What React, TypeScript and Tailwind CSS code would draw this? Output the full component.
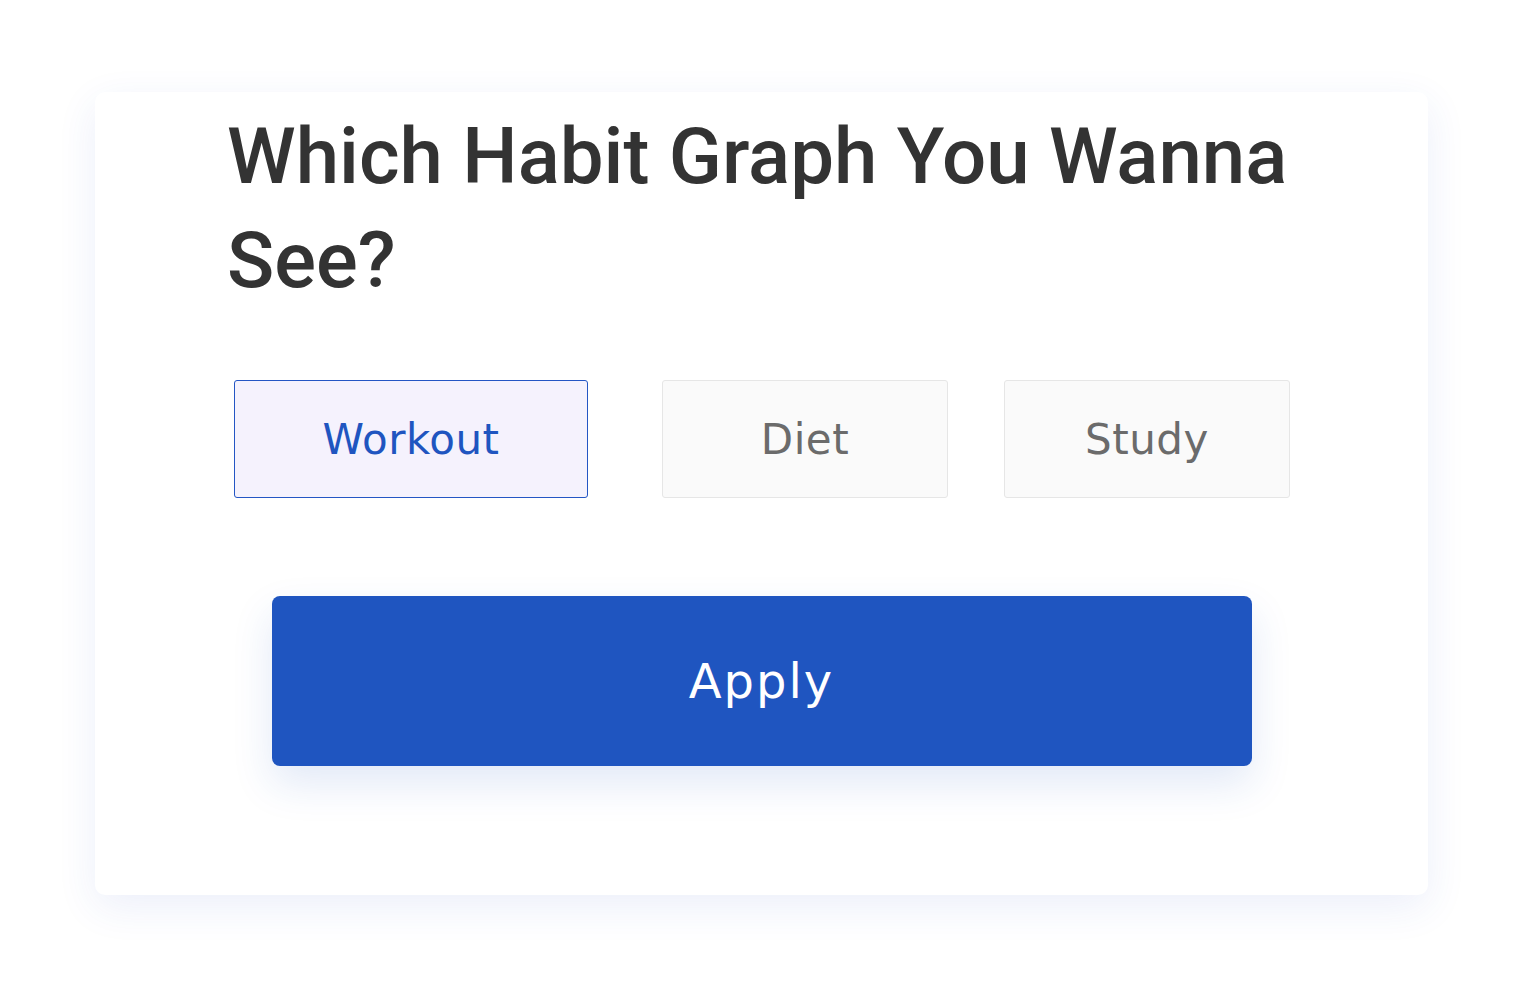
const options = [
  { label: "Workout", active: true, width: "w-[354px]" },
  { label: "Diet", active: false, width: "w-[286px]" },
  { label: "Study", active: false, width: "w-[286px]" },
];

export default function App() {
  return (
    <div className="min-h-[1004px] w-[1524px] bg-white pt-[92px] pl-[95px]">
      <div className="w-[1333px] h-[803px] rounded-[10px] bg-white shadow-[0_12px_40px_rgba(40,80,200,0.09)]">
        <h1
          className="pl-[132px] pt-[13px] pr-[100px] text-[78px] leading-[104px] font-medium text-[#333333]"
          style={{ fontFamily: "Roboto, sans-serif" }}
        >
          Which Habit Graph You Wanna See?
        </h1>

        <div className="mt-[67px] ml-[139px] flex items-center">
          {options.map((opt, i) => (
            <button
              key={opt.label}
              className={[
                "h-[118px] rounded-[3px] border text-[42px] tracking-[0.5px]",
                opt.width,
                i === 1 ? "ml-[74px]" : i === 2 ? "ml-[56px]" : "",
                opt.active
                  ? "border-[#2456c4] bg-[#f5f2fd] text-[#1f55c0]"
                  : "border-[#e6e6e6] bg-[#fafafa] text-[#6b6b6b]",
              ].join(" ")}
              style={{ fontFamily: "'DejaVu Sans', sans-serif" }}
            >
              {opt.label}
            </button>
          ))}
        </div>

        <div className="mt-[98px] flex justify-center">
          <button
            className="h-[170px] w-[980px] rounded-[8px] bg-[#1f55c0] text-[48px] tracking-[2px] text-white shadow-[0_18px_40px_rgba(31,85,192,0.13)]"
            style={{ fontFamily: "'DejaVu Sans', sans-serif" }}
          >
            Apply
          </button>
        </div>
      </div>
    </div>
  );
}
